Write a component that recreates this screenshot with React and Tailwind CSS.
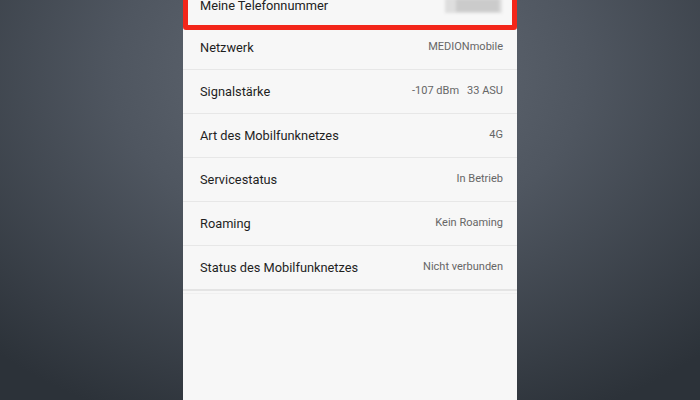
import React from "react";

const rows = [
  ["Netzwerk", "MEDIONmobile"],
  ["Signalstärke", null],
  ["Art des Mobilfunknetzes", "4G"],
  ["Servicestatus", "In Betrieb"],
  ["Roaming", "Kein Roaming"],
  ["Status des Mobilfunknetzes", "Nicht verbunden"],
];

export default function App() {
  return (
    <div
      className="w-[700px] h-[400px] overflow-hidden flex justify-center bg-[radial-gradient(ellipse_75%_95%_at_50%_18%,#666d77_0%,#4f5660_45%,#2c3239_100%)]"
      style={{ fontFamily: "Roboto, 'Noto Sans', sans-serif" }}
    >
      <div className="relative w-[334px] h-[420px] -mt-[19px] bg-[#f7f7f7] flex flex-col">
        {/* first row: phone number */}
        <div className="h-[44px] flex items-center justify-between pl-[17px] pr-[15px]">
          <span className="text-[12.8px] text-[#222222] pt-[5px]">Meine Telefonnummer</span>
          <div className="relative w-[57px] h-[15px] mt-[4px] blur-[1.5px]">
            <div className="absolute inset-0 bg-[#dedede]" />
            <div className="absolute top-[1px] bottom-[1px] left-[11px] right-[3px] bg-[#cbcbcb]" />
          </div>
        </div>
        {rows.map(([label, value]) => (
          <div
            key={label}
            className="h-[44px] flex items-center justify-between pl-[17px] pr-[14px] border-t border-[#e7e7e7]"
          >
            <span className="text-[12.8px] text-[#1f1f1f]">{label}</span>
            {value ? (
              <span className="text-[11px] text-[#666666]">{value}</span>
            ) : (
              <span className="text-[11px] text-[#666666] flex gap-[8px]">
                <span>-107 dBm</span>
                <span>33 ASU</span>
              </span>
            )}
          </div>
        ))}
        <div className="h-[2px] bg-[#e4e4e4]" />
        <div className="h-[1px] bg-[#f0f0f0] mt-[2px]" />
        <div className="flex-1" />
        {/* red highlight around first row */}
        <div className="absolute left-0 right-0 top-[-4px] h-[53px] border-[5px] border-[#f3261a] rounded-[3px]" />
      </div>
    </div>
  );
}
